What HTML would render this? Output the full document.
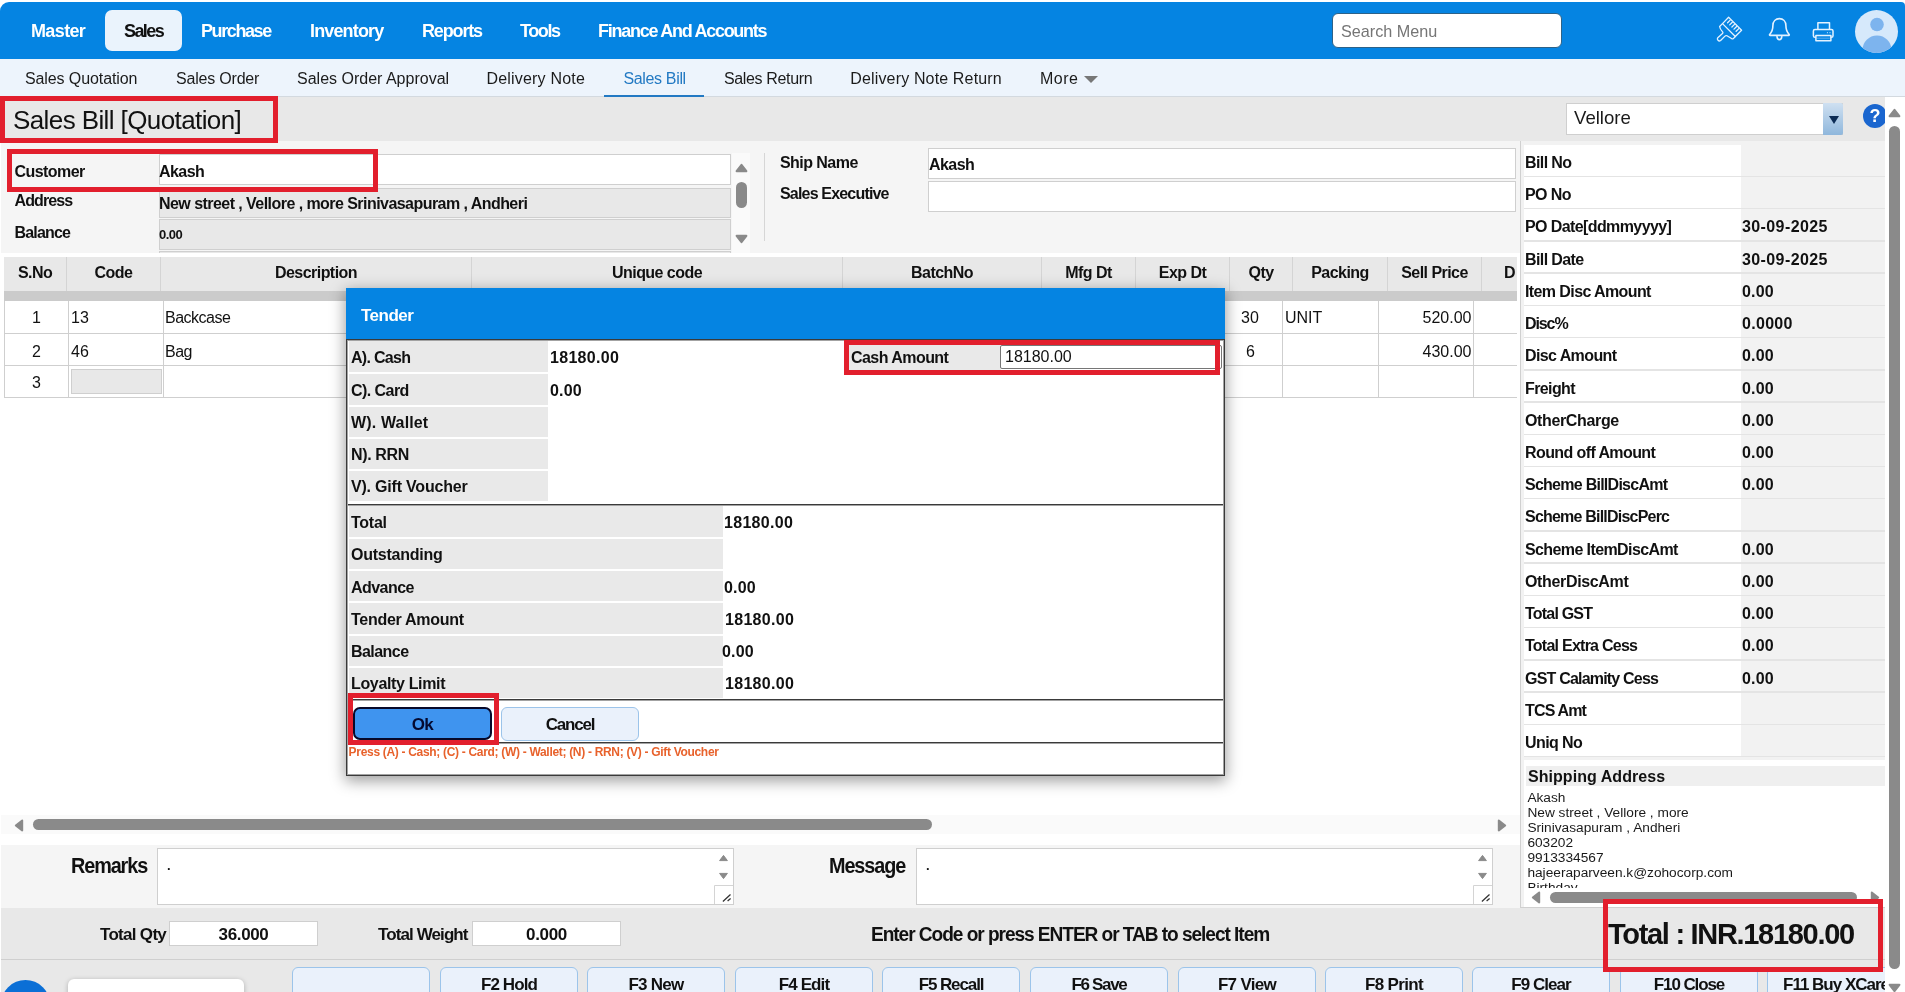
<!DOCTYPE html>
<html lang="en">
<head>
<meta charset="utf-8">
<title>Sales Bill [Quotation]</title>
<style>
*{box-sizing:border-box;margin:0;padding:0}
html,body{width:1905px;height:992px;overflow:hidden;background:#fff}
body{position:relative;font-family:"Liberation Sans",sans-serif;color:#111;font-size:16px;will-change:transform}
.abs{position:absolute}
.b{font-weight:bold}
.t{position:absolute;white-space:nowrap;line-height:1}
/* top bar */
#topbar{left:0;top:2px;width:1905px;height:57px;background:#0584e2;border-radius:9px 4px 0 0}
#topbar .m{color:#fff;font-weight:bold;font-size:18px;letter-spacing:-0.9px;top:20px}
#salestab{left:105px;top:8px;width:77px;height:41px;background:#eaf3fc;border-radius:7px}
#search{left:1332px;top:11px;width:230px;height:35px;background:#fff;border:1px solid #2d6288;border-radius:6px}
/* sub nav */
#subnav{left:0;top:59px;width:1905px;height:38px;background:#edf4fc;border-bottom:1px solid #d3d9df}
#subnav .s{font-size:16px;top:12px;color:#1b1b1b;letter-spacing:-0.15px}
/* title strip */
#titlebar{left:0;top:97px;width:1885px;height:44px;background:#e8e8e8}
.red{position:absolute;border:5px solid #e21f2d;z-index:50}
/* customer */
#cust{left:1px;top:141px;width:1519px;height:113px;background:#f5f5f5}
.inp{position:absolute;border:1px solid #cfcfcf;background:#fff}
.inp.g{background:#e8e8e8}

/* labels */
.lb{position:absolute;white-space:nowrap;line-height:1;font-weight:bold;font-size:16px;letter-spacing:-0.55px}
.tx{position:absolute;white-space:nowrap;line-height:1;font-size:16px}
/* table */
#thead{left:4px;top:257px;width:1513px;height:34px;background:#e8e8e8}
#thead .h{position:absolute;top:0;height:34px;border-left:1px solid #d4d4d4;text-align:center;font-weight:bold;font-size:16px;line-height:32px;letter-spacing:-0.55px;white-space:nowrap;overflow:hidden}
#tband{left:4px;top:291px;width:1513px;height:10px;background:#cbcbcb}
.vl{position:absolute;width:1px;background:#cfcfcf}
.hl{position:absolute;height:1px;background:#cfcfcf}
/* right panel */
#rp{left:1520px;top:141px;width:365px;height:767px;background:#f2f2f2;border-left:1px solid #d0d0d0;border-bottom:1px solid #d0d0d0}
.rl{position:absolute;left:3px;width:217px;height:30.8px;background:#fff}
.rl span{position:absolute;left:1px;top:10px;white-space:nowrap;line-height:1;font-weight:bold;font-size:16px;letter-spacing:-0.6px}
.rv{position:absolute;left:221px;top:8px;white-space:nowrap;line-height:1;font-weight:bold;font-size:16px;letter-spacing:0.2px}
.sep{position:absolute;left:3px;width:361px;height:1.42px;background:#e4e4e4}

/* dialog */
#dlg{left:346px;top:288px;width:879px;height:488px;background:#fff;box-shadow:0 4px 14px 1px rgba(0,0,0,.38);z-index:20}
#dlgh{left:0;top:0;width:879px;height:51px;background:#0584e2}
#dlgb{left:0;top:51px;width:879px;height:437px;border:2px solid #a3a3a3;outline:1px solid #3a3a3a;outline-offset:-1px;background:#fff}
.dl{position:absolute;left:1px;height:31px;background:#e9e9e9}
.dl span,.dv{position:absolute;white-space:nowrap;line-height:1;font-weight:bold;font-size:16px;letter-spacing:-0.55px}
.dl span{left:2px;top:7.8px}
.dk{position:absolute;left:0;width:875px;height:2px;background:linear-gradient(#3a3a3a 50%,#a3a3a3 50%)}
/* bottom */
#hsb{left:1px;top:815px;width:1519px;height:19px;background:#fafafa}
#rem{left:1px;top:845px;width:1519px;height:63px;background:#f5f5f5}
#tot{left:1px;top:908px;width:1884px;height:52px;background:#e8e8e8;border-bottom:1px solid #cfcfcf}
#btns{left:1px;top:960px;width:1884px;height:32px;background:#e8e8e8}
.fb{position:absolute;top:7px;width:138px;height:40px;background:#eaf1fb;border:1px solid #9cc4ea;border-radius:6px;text-align:center;font-weight:bold;font-size:17px;letter-spacing:-0.6px;line-height:33px;white-space:nowrap;overflow:hidden}
</style>
</head>
<body>

<!-- ======= TOP BAR ======= -->
<div id="topbar" class="abs">
  <div id="salestab" class="abs"></div>
  <span class="t m" style="left:31px;letter-spacing:-0.63px">Master</span>
  <span class="t m" style="left:124px;color:#111;letter-spacing:-1.6px">Sales</span>
  <span class="t m" style="left:201px;letter-spacing:-1.4px">Purchase</span>
  <span class="t m" style="left:310px;letter-spacing:-0.85px">Inventory</span>
  <span class="t m" style="left:422px;letter-spacing:-1.15px">Reports</span>
  <span class="t m" style="left:520px;letter-spacing:-1.4px">Tools</span>
  <span class="t m" style="left:598px;letter-spacing:-1.27px">Finance And Accounts</span>
  <div id="search" class="abs"><span class="t" style="left:8px;top:9px;font-size:16.2px;color:#757575">Search Menu</span></div>
</div>

<!-- ======= SUB NAV ======= -->
<div id="subnav" class="abs">
  <span class="t s" style="left:25px;letter-spacing:-0.1px">Sales Quotation</span>
  <span class="t s" style="left:176px;letter-spacing:-0.2px">Sales Order</span>
  <span class="t s" style="left:297px;letter-spacing:0px">Sales Order Approval</span>
  <span class="t s" style="left:486.4px;letter-spacing:0.2px">Delivery Note</span>
  <span class="t s" style="left:623.5px;color:#2279c3;letter-spacing:-0.35px">Sales Bill</span>
  <span class="t s" style="left:724px;letter-spacing:-0.35px">Sales Return</span>
  <span class="t s" style="left:850.3px;letter-spacing:0.15px">Delivery Note Return</span>
  <span class="t s" style="left:1040px;letter-spacing:0.5px">More</span>
  <div class="abs" style="left:1084px;top:17px;width:0;height:0;border-left:7px solid transparent;border-right:7px solid transparent;border-top:7px solid #777"></div>
  <div class="abs" style="left:604px;top:36px;width:100px;height:2px;background:#2279c3"></div>
</div>

<!-- ======= TITLE STRIP ======= -->
<div id="titlebar" class="abs">
  <span class="t" style="left:13px;top:10px;font-size:26px;letter-spacing:-0.6px">Sales Bill [Quotation]</span>
</div>
<div class="red" style="left:0;top:96px;width:278px;height:47px"></div>

<!-- ======= CUSTOMER AREA ======= -->
<div id="cust" class="abs"></div>


<!-- customer fields -->
<span class="lb" style="left:14.5px;top:164px">Customer</span>
<span class="lb" style="left:14.5px;top:193px;letter-spacing:-0.9px">Address</span>
<span class="lb" style="left:14.5px;top:225px;letter-spacing:-0.82px">Balance</span>
<div class="inp" style="left:159px;top:154px;width:572px;height:31px"><span class="lb" style="left:-1px;top:9px">Akash</span></div>
<div class="inp g" style="left:159px;top:188px;width:572px;height:30px"><span class="lb" style="left:-1px;top:7px">New street , Vellore , more Srinivasapuram , Andheri</span></div>
<div class="inp g" style="left:159px;top:219px;width:572px;height:31px"><span class="lb" style="left:-1px;top:8px;font-size:13px">0.00</span></div>
<div class="inp g" style="left:159px;top:251px;width:572px;height:3px;border-bottom:0"></div>
<!-- customer scroll -->
<div class="abs" style="left:732px;top:153px;width:18px;height:100px;background:#fafafa"></div>
<svg class="abs" style="left:735px;top:163px" width="13" height="10" viewBox="0 0 13 10"><path d="M1.6 8.2 L6.5 1.8 L11.4 8.2Z" fill="#8a8a8a" stroke="#8a8a8a" stroke-width="2" stroke-linejoin="round"/></svg>
<div class="abs" style="left:736px;top:182px;width:11px;height:26px;border-radius:6px;background:#8a8a8a"></div>
<svg class="abs" style="left:735px;top:234px" width="13" height="10" viewBox="0 0 13 10"><path d="M1.6 1.8 L6.5 8.2 L11.4 1.8Z" fill="#8a8a8a" stroke="#8a8a8a" stroke-width="2" stroke-linejoin="round"/></svg>
<div class="abs" style="left:764px;top:153px;width:1px;height:88px;background:#d6d6d6"></div>
<!-- ship -->
<span class="lb" style="left:780px;top:155px">Ship Name</span>
<span class="lb" style="left:780px;top:186px;letter-spacing:-0.82px">Sales Executive</span>
<div class="inp" style="left:928px;top:148px;width:588px;height:31px"><span class="lb" style="left:0;top:8px">Akash</span></div>
<div class="inp" style="left:928px;top:181px;width:588px;height:31px"></div>
<div class="red" style="left:7px;top:149px;width:371px;height:43px"></div>

<!-- table -->
<div class="abs" style="left:1px;top:253px;width:1519px;height:562px;background:#fff"></div>
<div id="thead" class="abs">
  <div class="h" style="left:0;width:62px;border-left:0">S.No</div>
  <div class="h" style="left:62px;width:94px">Code</div>
  <div class="h" style="left:156px;width:311px">Description</div>
  <div class="h" style="left:467px;width:371px">Unique code</div>
  <div class="h" style="left:838px;width:199px">BatchNo</div>
  <div class="h" style="left:1037px;width:94px">Mfg Dt</div>
  <div class="h" style="left:1131px;width:94px">Exp Dt</div>
  <div class="h" style="left:1225px;width:63px">Qty</div>
  <div class="h" style="left:1288px;width:95px">Packing</div>
  <div class="h" style="left:1383px;width:94px">Sell Price</div>
  <div class="h" style="left:1477px;width:36px;text-align:left;padding-left:22px;letter-spacing:2px">Disc%</div>
</div>
<div id="tband" class="abs"></div>
<!-- grid lines -->
<div class="vl" style="left:4px;top:301px;height:97px"></div>
<div class="vl" style="left:68px;top:301px;height:97px"></div>
<div class="vl" style="left:163px;top:301px;height:97px"></div>
<div class="vl" style="left:1282px;top:301px;height:97px"></div>
<div class="vl" style="left:1378px;top:301px;height:97px"></div>
<div class="vl" style="left:1473px;top:301px;height:97px"></div>
<div class="hl" style="left:4px;top:333px;width:1513px"></div>
<div class="hl" style="left:4px;top:365px;width:1513px"></div>
<div class="hl" style="left:4px;top:397px;width:1513px"></div>
<!-- cells -->
<span class="tx" style="left:32px;top:310px">1</span>
<span class="tx" style="left:32px;top:343.5px">2</span>
<span class="tx" style="left:32px;top:375px">3</span>
<span class="tx" style="left:71px;top:310px">13</span>
<span class="tx" style="left:71px;top:343.5px">46</span>
<span class="tx" style="left:165px;top:310px;letter-spacing:-0.5px">Backcase</span>
<span class="tx" style="left:165px;top:343.5px;letter-spacing:-0.5px">Bag</span>
<div class="inp g" style="left:71px;top:369px;width:91px;height:25px"></div>
<span class="tx" style="left:1241px;top:310px">30</span>
<span class="tx" style="left:1246px;top:343.5px">6</span>
<span class="tx" style="left:1285px;top:310px">UNIT</span>
<span class="tx" style="left:1422.5px;top:310px">520.00</span>
<span class="tx" style="left:1422.5px;top:343.5px">430.00</span>

<!-- ======= RIGHT PANEL ======= -->
<div id="rp" class="abs">
  <div class="rl" style="top:4.00px"><span>Bill No</span></div><div class="sep" style="top:34.80px"></div>
  <div class="rl" style="top:36.22px"><span>PO No</span></div><div class="sep" style="top:67.02px"></div>
  <div class="rl" style="top:68.44px"><span>PO Date[ddmmyyyy]</span></div><span class="rv" style="top:78.44px;letter-spacing:0.4px">30-09-2025</span><div class="sep" style="top:99.24px"></div>
  <div class="rl" style="top:100.66px"><span>Bill Date</span></div><span class="rv" style="top:110.66px;letter-spacing:0.4px">30-09-2025</span><div class="sep" style="top:131.46px"></div>
  <div class="rl" style="top:132.88px"><span>Item Disc Amount</span></div><span class="rv" style="top:142.88px">0.00</span><div class="sep" style="top:163.68px"></div>
  <div class="rl" style="top:165.10px"><span style="letter-spacing:-1.1px">Disc%</span></div><span class="rv" style="top:175.10px;letter-spacing:0.3px">0.0000</span><div class="sep" style="top:195.90px"></div>
  <div class="rl" style="top:197.32px"><span>Disc Amount</span></div><span class="rv" style="top:207.32px">0.00</span><div class="sep" style="top:228.12px"></div>
  <div class="rl" style="top:229.54px"><span>Freight</span></div><span class="rv" style="top:239.54px">0.00</span><div class="sep" style="top:260.34px"></div>
  <div class="rl" style="top:261.76px"><span style="letter-spacing:-0.36px">OtherCharge</span></div><span class="rv" style="top:271.76px">0.00</span><div class="sep" style="top:292.56px"></div>
  <div class="rl" style="top:293.98px"><span>Round off Amount</span></div><span class="rv" style="top:303.98px">0.00</span><div class="sep" style="top:324.78px"></div>
  <div class="rl" style="top:326.20px"><span style="letter-spacing:-0.74px">Scheme BillDiscAmt</span></div><span class="rv" style="top:336.20px">0.00</span><div class="sep" style="top:357.00px"></div>
  <div class="rl" style="top:358.42px"><span style="letter-spacing:-0.79px">Scheme BillDiscPerc</span></div><div class="sep" style="top:389.22px"></div>
  <div class="rl" style="top:390.64px"><span>Scheme ItemDiscAmt</span></div><span class="rv" style="top:400.64px">0.00</span><div class="sep" style="top:421.44px"></div>
  <div class="rl" style="top:422.86px"><span style="letter-spacing:-0.35px">OtherDiscAmt</span></div><span class="rv" style="top:432.86px">0.00</span><div class="sep" style="top:453.66px"></div>
  <div class="rl" style="top:455.08px"><span style="letter-spacing:-0.8px">Total GST</span></div><span class="rv" style="top:465.08px">0.00</span><div class="sep" style="top:485.88px"></div>
  <div class="rl" style="top:487.30px"><span style="letter-spacing:-0.75px">Total Extra Cess</span></div><span class="rv" style="top:497.30px">0.00</span><div class="sep" style="top:518.10px"></div>
  <div class="rl" style="top:519.52px"><span style="letter-spacing:-0.8px">GST Calamity Cess</span></div><span class="rv" style="top:529.52px">0.00</span><div class="sep" style="top:550.32px"></div>
  <div class="rl" style="top:551.74px"><span style="letter-spacing:-0.85px">TCS Amt</span></div><div class="sep" style="top:582.54px"></div>
  <div class="rl" style="top:583.96px"><span>Uniq No</span></div><div class="sep" style="top:614.76px"></div>
</div>


<!-- ======= TENDER DIALOG ======= -->
<div id="dlg" class="abs">
  <div id="dlgh" class="abs"><span class="t b" style="left:15px;top:18.6px;font-size:17px;color:#fff;letter-spacing:-0.5px">Tender</span></div>
  <div id="dlgb" class="abs">
    <div class="dl" style="top:0px;height:31.4px;width:199px"><span style="top:9px;letter-spacing:-0.7px">A). Cash</span></div><span class="dv" style="left:202px;top:9px;letter-spacing:0.3px">18180.00</span>
    <div class="dl" style="top:33.4px;height:30.2px;width:199px"><span style="top:8.4px">C). Card</span></div><span class="dv" style="left:202px;top:41.8px;letter-spacing:0.2px">0.00</span>
    <div class="dl" style="top:65.5px;height:30.2px;width:199px"><span style="top:8.4px;letter-spacing:0.15px">W). Wallet</span></div>
    <div class="dl" style="top:97.7px;height:30.2px;width:199px"><span style="top:8.2px;letter-spacing:-0.35px">N). RRN</span></div>
    <div class="dl" style="top:129.9px;height:30.2px;width:199px"><span style="top:8.2px;letter-spacing:-0.2px">V). Gift Voucher</span></div>
    <div class="dk" style="top:163px"></div>
    <div class="dl" style="top:165.3px;height:30.4px;width:374px"><span style="top:8.8px;letter-spacing:-0.25px">Total</span></div><span class="dv" style="left:376px;top:174.3px;letter-spacing:0.3px">18180.00</span>
    <div class="dl" style="top:197.7px;height:30.4px;width:374px"><span style="top:8.8px;letter-spacing:-0.25px">Outstanding</span></div>
    <div class="dl" style="top:230px;height:30.4px;width:374px"><span style="top:8.8px">Advance</span></div><span class="dv" style="left:376px;top:238.5px;letter-spacing:0.2px">0.00</span>
    <div class="dl" style="top:262.3px;height:30.4px;width:374px"><span style="top:8.8px;letter-spacing:-0.28px">Tender Amount</span></div><span class="dv" style="left:377px;top:270.7px;letter-spacing:0.3px">18180.00</span>
    <div class="dl" style="top:294.5px;height:30.4px;width:374px"><span style="top:8.8px">Balance</span></div><span class="dv" style="left:374px;top:303px;letter-spacing:0.2px">0.00</span>
    <div class="dl" style="top:326.7px;height:30.4px;width:374px"><span style="top:8.8px;letter-spacing:-0.35px">Loyalty Limit</span></div><span class="dv" style="left:377px;top:335.1px;letter-spacing:0.3px">18180.00</span>
    <div class="dk" style="top:358px"></div>
    <div class="dk" style="top:401px"></div>
    <!-- cash amount -->
    <div class="abs" style="left:500px;top:1px;width:153px;height:30px;background:#e9e9e9"><span class="dv" style="left:3px;top:8px">Cash Amount</span></div>
    <div class="abs" style="left:652px;top:4px;width:222px;height:24px;background:#fff;border:1px solid #767676;border-radius:2px"><span class="t" style="left:4px;top:3px;font-size:16px">18180.00</span></div>
    <!-- buttons -->
    <div class="abs" style="left:5px;top:366px;width:139px;height:33px;background:#3f94ef;border:2px solid #07092a;color:#040a30;border-radius:7px;text-align:center;font-weight:bold;font-size:17px;line-height:31px;letter-spacing:-0.6px">Ok</div>
    <div class="abs" style="left:153px;top:366px;width:138px;height:34px;background:#eaf1fb;border:1px solid #9cc4ea;border-radius:6px;text-align:center;font-weight:bold;font-size:17px;line-height:33px;letter-spacing:-1.2px">Cancel</div>
    <span class="t b" style="left:0.6px;top:405px;font-size:12px;color:#e8622c;letter-spacing:-0.31px">Press (A) - Cash; (C) - Card; (W) - Wallet; (N) - RRN; (V) - Gift Voucher</span>
  </div>
</div>
<div class="red" style="left:844px;top:340px;width:376px;height:35px"></div>
<div class="red" style="left:348px;top:693px;width:151px;height:52px"></div>

<!-- ======= BOTTOM ======= -->
<div id="hsb" class="abs">
  <svg class="abs" style="left:13px;top:4px" width="10" height="13" viewBox="0 0 10 13"><path d="M8.2 1.6 L1.8 6.5 L8.2 11.4Z" fill="#8a8a8a" stroke="#8a8a8a" stroke-width="2" stroke-linejoin="round"/></svg>
  <div class="abs" style="left:32px;top:4px;width:899px;height:11px;border-radius:6px;background:#8a8a8a"></div>
  <svg class="abs" style="left:1496px;top:4px" width="10" height="13" viewBox="0 0 10 13"><path d="M1.8 1.6 L8.2 6.5 L1.8 11.4Z" fill="#8a8a8a" stroke="#8a8a8a" stroke-width="2" stroke-linejoin="round"/></svg>
</div>
<div id="rem" class="abs">
  <span class="t b" style="left:70px;top:9.6px;font-size:22px;letter-spacing:-1.2px;transform:scaleX(0.9);transform-origin:left center">Remarks</span>
  <div class="inp" style="left:156px;top:3px;width:577px;height:57px"><span class="t b" style="left:9px;top:10px;font-size:13px">.</span>
    <svg class="abs" style="right:0;top:0" width="19" height="55" viewBox="0 0 19 55"><path d="M5.6 11.6 L9.5 6.4 L13.4 11.6Z M5.6 24.4 L9.5 29.6 L13.4 24.4Z" fill="#8a8a8a" stroke="#8a8a8a" stroke-width="1" stroke-linejoin="round"/><path d="M0.5 55 V36.5 H19" fill="none" stroke="#d4d4d4"/><path d="M8.9 52.4 L16.5 45.6 M13.6 52 L16.6 49.6" stroke="#333" stroke-width="1.3" fill="none"/></svg>
  </div>
  <span class="t b" style="left:828px;top:9.6px;font-size:22px;letter-spacing:-1.2px;transform:scaleX(0.9);transform-origin:left center">Message</span>
  <div class="inp" style="left:915px;top:3px;width:577px;height:57px"><span class="t b" style="left:9px;top:10px;font-size:13px">.</span>
    <svg class="abs" style="right:0;top:0" width="19" height="55" viewBox="0 0 19 55"><path d="M5.6 11.6 L9.5 6.4 L13.4 11.6Z M5.6 24.4 L9.5 29.6 L13.4 24.4Z" fill="#8a8a8a" stroke="#8a8a8a" stroke-width="1" stroke-linejoin="round"/><path d="M0.5 55 V36.5 H19" fill="none" stroke="#d4d4d4"/><path d="M8.9 52.4 L16.5 45.6 M13.6 52 L16.6 49.6" stroke="#333" stroke-width="1.3" fill="none"/></svg>
  </div>
</div>
<div id="tot" class="abs">
  <span class="t b" style="left:99px;top:18px;font-size:17px;letter-spacing:-0.7px">Total Qty</span>
  <div class="inp" style="left:168px;top:13px;width:149px;height:25px;text-align:center;font-weight:bold;font-size:17px;line-height:25.5px;letter-spacing:-0.35px">36.000</div>
  <span class="t b" style="left:377px;top:18px;font-size:17px;letter-spacing:-0.9px">Total Weight</span>
  <div class="inp" style="left:471px;top:13px;width:149px;height:25px;text-align:center;font-weight:bold;font-size:17px;line-height:25.5px;letter-spacing:-0.35px">0.000</div>
  <span class="t b" style="left:870px;top:16px;font-size:20px;letter-spacing:-1.1px;transform:scaleX(0.955);transform-origin:left center">Enter Code or press ENTER or TAB to select Item</span>
  <span class="t b" style="left:1607px;top:11.9px;font-size:29px;letter-spacing:-1.3px">Total : INR.18180.00</span>
</div>
<div id="btns" class="abs">
  <div class="abs" style="left:0;top:19.5px;width:49px;height:49px;border-radius:50%;background:#0b6fd6"></div>
  <div class="abs" style="left:67px;top:19px;width:176px;height:30px;border-radius:6px;background:#fff;box-shadow:0 1px 5px rgba(0,0,0,.25)"></div>
  <div class="fb" style="left:291px"></div>
  <div class="fb" style="left:439px;letter-spacing:-0.9px">F2 Hold</div>
  <div class="fb" style="left:586px;letter-spacing:-0.75px">F3 New</div>
  <div class="fb" style="left:734px;letter-spacing:-0.9px">F4 Edit</div>
  <div class="fb" style="left:881px;letter-spacing:-1.1px">F5 Recall</div>
  <div class="fb" style="left:1029px;letter-spacing:-1.35px">F6 Save</div>
  <div class="fb" style="left:1177px;letter-spacing:-0.7px">F7 View</div>
  <div class="fb" style="left:1324px;letter-spacing:-0.65px">F8 Print</div>
  <div class="fb" style="left:1471px;letter-spacing:-0.95px">F9 Clear</div>
  <div class="fb" style="left:1619px;letter-spacing:-1.1px">F10 Close</div>
  <div class="fb" style="left:1766px;width:160px;text-align:left;padding-left:15px;letter-spacing:-1.0px">F11 Buy XCare</div>
</div>
<div class="red" style="left:1603px;top:899px;width:280px;height:73px"></div>


<!-- ======= TOP RIGHT ICONS ======= -->
<svg class="abs" style="left:1712px;top:12px" width="36" height="34" viewBox="0 0 36 34" fill="none" stroke="#e4f2ff" stroke-width="1.3" stroke-linejoin="round" stroke-linecap="round">
  <path d="M16.6 5.3 L29.6 18.2 L23.3 24.5 L10.5 11.6 Z"/>
  <path d="M18.2 8.1 L15.6 10.7 M20.3 10.3 L17.7 12.9 M22.5 12.4 L19.9 15 M24.6 14.5 L22 17.1 M26.8 16.6 L24.1 19.3"/>
  <path d="M10.5 11.6 L7.6 14.5 C7.9 16.6 9.3 18.5 10.4 19.6 Q11.4 20.6 10.5 21.4 L5.8 25.7 A2 2 0 0 0 8.6 28.5 L13 24.1 Q13.9 23.2 15 23.8 L19.9 26.8 Q20.7 27.2 21.3 26.6 L23.3 24.5"/>
</svg>
<svg class="abs" style="left:1766px;top:14px" width="28" height="30" viewBox="0 0 28 30" fill="none" stroke="#e4f2ff" stroke-width="1.6" stroke-linejoin="round" stroke-linecap="round">
  <path d="M4.2 21.4 C3.5 21.4 3.3 20.7 3.8 20.2 C6.3 17.6 6.9 15.6 6.9 11.6 C6.9 7.4 9.7 4.6 13.4 4.6 C17.1 4.6 19.9 7.4 19.9 11.6 C19.9 15.6 20.5 17.6 23 20.2 C23.5 20.7 23.3 21.4 22.6 21.4 Z"/>
  <path d="M11 22.6 C11.2 24.6 12.2 25.6 13.4 25.6 C14.6 25.6 15.6 24.6 15.8 22.6"/>
</svg>
<svg class="abs" style="left:1810px;top:19px" width="28" height="26" viewBox="0 0 28 26" fill="none" stroke="#e4f2ff" stroke-width="1.5" stroke-linejoin="round">
  <path d="M7.9 10.4 V3.7 H19.5 V10.4"/>
  <rect x="3.4" y="10.4" width="19.6" height="7.9" rx="1.6"/>
  <rect x="5.9" y="16.6" width="15" height="5.1" fill="#0584e2"/>
  <path d="M7 19.2 H19.8" stroke-width="0.7" stroke="#7fc0f5"/>
  <path d="M16.9 13.6 H18 M19.4 13.6 H20.5" stroke-width="1.3" stroke="#9fd0f7"/>
</svg>
<div class="abs" style="left:1855px;top:9.5px;width:43px;height:43px;border-radius:50%;overflow:hidden;background:#d6e9fb">
  <svg class="abs" style="left:-0.5px;top:-0.5px" width="44" height="44" viewBox="0 0 44 44"><circle cx="22" cy="15.5" r="6.8" fill="#7db4ee"/><circle cx="22" cy="41" r="14.5" fill="#7db4ee"/></svg>
</div>

<!-- ======= LOCATION SELECT + HELP ======= -->
<div class="abs" style="left:1566px;top:103px;width:277px;height:32px;background:#fff;border:1px solid #cfcfcf">
  <span class="t" style="left:7px;top:5.3px;font-size:18.6px;color:#1a1a1a">Vellore</span>
  <div class="abs" style="right:-1px;top:-1px;width:20px;height:32px;background:linear-gradient(#cfe0f1,#8fb7dc);border-radius:0 2px 2px 0"></div>
  <div class="abs" style="right:3.5px;top:12px;width:0;height:0;border-left:5px solid transparent;border-right:5px solid transparent;border-top:8px solid #0c2c55"></div>
</div>
<div class="abs" style="left:1863px;top:103.5px;width:22px;height:24px;overflow:hidden">
  <div class="abs" style="left:0;top:0;width:24px;height:24px;border-radius:50%;background:#1a66cf;color:#fff;font-weight:bold;font-size:18px;line-height:24px;text-align:center">?</div>
</div>

<!-- ======= PAGE SCROLLBAR ======= -->
<div class="abs" style="left:1885px;top:97px;width:20px;height:895px;background:#fff"></div>
<svg class="abs" style="left:1888px;top:108px" width="13" height="10" viewBox="0 0 13 10"><path d="M1.6 8.2 L6.5 1.8 L11.4 8.2Z" fill="#8a8a8a" stroke="#8a8a8a" stroke-width="2" stroke-linejoin="round"/></svg>
<div class="abs" style="left:1889px;top:126px;width:11px;height:843px;border-radius:6px;background:#8a8a8a"></div>
<svg class="abs" style="left:1888px;top:983px" width="13" height="10" viewBox="0 0 13 10"><path d="M1.6 1.8 L6.5 8.2 L11.4 1.8Z" fill="#8a8a8a" stroke="#8a8a8a" stroke-width="2" stroke-linejoin="round"/></svg>

<!-- ======= SHIPPING ADDRESS ======= -->
<div class="abs" style="left:1524px;top:760px;width:361px;height:147px;background:#fff"></div>
<div class="abs" style="left:1526px;top:766px;width:359px;height:20px;background:#efefef"><span class="t b" style="left:2px;top:3px;font-size:16px;letter-spacing:0.05px">Shipping Address</span></div>
<div class="abs" style="left:1527.4px;top:789.7px;width:350px;height:98.3px;overflow:hidden;font-size:13.7px;line-height:15px;color:#1a1a1a;white-space:nowrap">Akash<br>New street , Vellore , more<br>Srinivasapuram , Andheri<br>603202<br>9913334567<br>hajeeraparveen.k@zohocorp.com<br>Birthday</div>
<svg class="abs" style="left:1531px;top:891px" width="10" height="13" viewBox="0 0 10 13"><path d="M8.2 1.6 L1.8 6.5 L8.2 11.4Z" fill="#8a8a8a" stroke="#8a8a8a" stroke-width="2" stroke-linejoin="round"/></svg>
<div class="abs" style="left:1550px;top:892px;width:307px;height:11px;border-radius:6px;background:#8a8a8a"></div>
<svg class="abs" style="left:1870px;top:891px" width="10" height="13" viewBox="0 0 10 13"><path d="M1.8 1.6 L8.2 6.5 L1.8 11.4Z" fill="#8a8a8a" stroke="#8a8a8a" stroke-width="2" stroke-linejoin="round"/></svg>


</body>
</html>
